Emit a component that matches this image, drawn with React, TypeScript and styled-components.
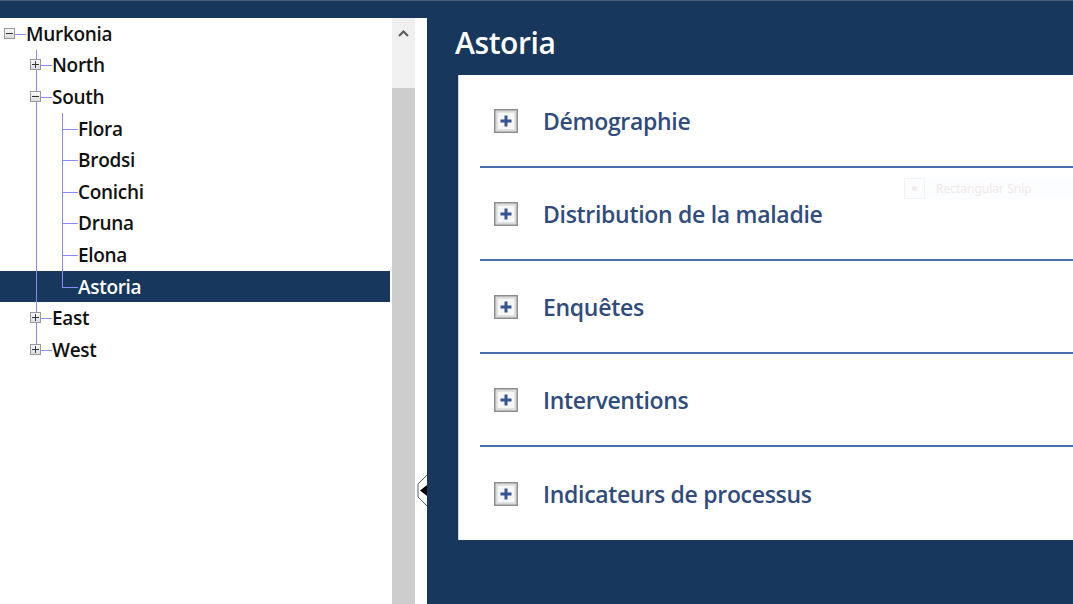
import styled, { createGlobalStyle } from "styled-components";

const NAVY = "#18375c";

const GlobalStyle = createGlobalStyle`
	html, body {
		margin: 0;
		padding: 0;
		overflow: hidden;
		background: ${NAVY};
	}
`;

const Shell = styled.div`
	width: 1073px;
	height: 604px;
	display: grid;
	grid-template-rows: 18px 1fr;
	font-family: "Open Sans", "Noto Sans", sans-serif;
`;

const TopBar = styled.div`
	background: ${NAVY};
	border-top: 1px solid #4b5f78;
`;

const Main = styled.div`
	display: flex;
	min-height: 0;
`;

const TreePane = styled.div`
	width: 392px;
	background: #fff;
	overflow: hidden;
`;

const TreeRow = styled.div<{ $selected?: boolean }>`
	display: flex;
	align-items: stretch;
	width: 390px;
	height: 31.6px;
	background: ${(p) => (p.$selected ? NAVY : "transparent")};
	color: ${(p) => (p.$selected ? "#fff" : "#111")};
`;

const Label = styled.span`
	align-self: center;
	font-size: 19px;
	font-weight: 600;
	letter-spacing: -0.3px;
`;

type Guide = "blank" | "pipe" | "tee" | "elbow" | "root";

const GuideCell = styled.div<{ $kind: Guide }>`
	position: relative;
	width: 26px;
	flex: none;

	&::before {
		content: "";
		display: ${(p) => (p.$kind === "blank" || p.$kind === "root" ? "none" : "block")};
		position: absolute;
		left: 10px;
		top: 0;
		width: 1px;
		bottom: ${(p) => (p.$kind === "elbow" ? "50%" : "0")};
		background: #8a8aff;
	}

	&::after {
		content: "";
		display: ${(p) => (p.$kind === "blank" || p.$kind === "pipe" ? "none" : "block")};
		position: absolute;
		left: 10px;
		right: 0;
		top: 50%;
		height: 1px;
		background: #8a8aff;
	}
`;

const Expander = styled.span`
	position: absolute;
	z-index: 1;
	left: 4px;
	top: calc(50% - 6px);
	width: 11px;
	height: 11px;
	box-sizing: border-box;
	border: 1px solid #9a9a9a;
	background: linear-gradient(#fafafa, #dcdcdc);
	display: flex;
	align-items: center;
	justify-content: center;
`;

function ExpanderBox({ open }: { open: boolean }) {
	return (
		<Expander>
			<svg width="7" height="7" viewBox="0 0 7 7">
				<rect x="0" y="3" width="7" height="1" fill="#333" />
				{!open && <rect x="3" y="0" width="1" height="7" fill="#2a3c70" />}
			</svg>
		</Expander>
	);
}

type Node = {
	label: string;
	guides: Guide[];
	expander?: "open" | "closed";
	selected?: boolean;
};

const tree: Node[] = [
	{ label: "Murkonia", guides: ["root"], expander: "open" },
	{ label: "North", guides: ["blank", "tee"], expander: "closed" },
	{ label: "South", guides: ["blank", "tee"], expander: "open" },
	{ label: "Flora", guides: ["blank", "pipe", "tee"] },
	{ label: "Brodsi", guides: ["blank", "pipe", "tee"] },
	{ label: "Conichi", guides: ["blank", "pipe", "tee"] },
	{ label: "Druna", guides: ["blank", "pipe", "tee"] },
	{ label: "Elona", guides: ["blank", "pipe", "tee"] },
	{ label: "Astoria", guides: ["blank", "pipe", "elbow"], selected: true },
	{ label: "East", guides: ["blank", "tee"], expander: "closed" },
	{ label: "West", guides: ["blank", "elbow"], expander: "closed" },
];

const Scrollbar = styled.div`
	width: 23px;
	flex: none;
	display: flex;
	flex-direction: column;
	background: #f0f0f0;
`;

const ScrollButton = styled.div`
	height: 30px;
	display: flex;
	align-items: center;
	justify-content: center;
`;

const ScrollTrack = styled.div`
	height: 40px;
`;

const ScrollThumb = styled.div`
	flex: 1;
	background: #cdcdcd;
`;

const Splitter = styled.div`
	position: relative;
	width: 12px;
	flex: none;
	background: #fff;
`;

const CollapseHandle = styled.svg`
	position: absolute;
	left: 2px;
	top: 456px;
`;

const ContentPane = styled.div`
	position: relative;
	flex: 1;
	background: ${NAVY};
	display: flex;
	flex-direction: column;
	overflow: hidden;
`;

const Title = styled.h1`
	margin: 0;
	height: 57px;
	padding-left: 28px;
	box-sizing: border-box;
	padding-top: 4px;
	font-size: 30px;
	font-weight: 600;
	color: #fff;
	line-height: 42px;
	letter-spacing: -0.4px;
`;

const Card = styled.div`
	margin-left: 31px;
	height: 465px;
	background: #fff;
	border-left: 1px solid #c9d3de;
	padding-left: 21px;
	box-sizing: border-box;
`;

const Section = styled.div<{ $last?: boolean }>`
	height: 93px;
	box-sizing: border-box;
	display: flex;
	align-items: center;
	gap: 25px;
	padding-left: 14px;
	border-bottom: ${(p) => (p.$last ? "none" : "2px solid #4a6fa8")};
`;

const SectionTitle = styled.span`
	font-size: 23px;
	font-weight: 600;
	color: #2f4c7c;
	letter-spacing: -0.3px;
`;

const SnipGhost = styled.div`
	position: absolute;
	left: 477px;
	top: 159px;
	display: flex;
	align-items: center;
	gap: 11px;
	height: 22px;
	padding-right: 48px;
	background: #fcfdfe;
	font-family: "Noto Sans", sans-serif;
	font-size: 12px;
	white-space: nowrap;
	color: #f1e9e9;
`;

const SnipIcon = styled.span`
	width: 21px;
	height: 21px;
	box-sizing: border-box;
	border: 1px solid #f0f4f8;
	display: flex;
	align-items: center;
	justify-content: center;

	&::after {
		content: "";
		width: 5px;
		height: 5px;
		border-radius: 50%;
		background: #f0ecec;
	}
`;

function PlusIcon() {
	return (
		<svg width="24" height="24" viewBox="0 0 24 24">
			<rect x="0.75" y="0.75" width="22.5" height="22.5" fill="#e4e4e4" stroke="#8c8c8c" strokeWidth="1.5" />
			<rect x="3" y="3" width="18" height="18" fill="#f7f7f7" stroke="#d0d0d0" />
			<rect x="6.5" y="10.5" width="11" height="3" fill="#34558f" />
			<rect x="10.5" y="6.5" width="3" height="11" fill="#34558f" />
		</svg>
	);
}

const sections = [
	"Démographie",
	"Distribution de la maladie",
	"Enquêtes",
	"Interventions",
	"Indicateurs de processus",
];

export default function App() {
	return (
		<>
			<GlobalStyle />
			<Shell>
				<TopBar />
				<Main>
					<TreePane>
						{tree.map((node) => (
							<TreeRow key={node.label} $selected={node.selected}>
								{node.guides.map((g, i) => (
									<GuideCell key={i} $kind={g}>
										{i === node.guides.length - 1 && node.expander
											? <ExpanderBox open={node.expander === "open"} />
											: null}
									</GuideCell>
								))}
								<Label>{node.label}</Label>
							</TreeRow>
						))}
					</TreePane>

					<Scrollbar>
						<ScrollButton>
							<svg width="11" height="7" viewBox="0 0 11 7">
								<polyline points="1,6 5.5,1.5 10,6" fill="none" stroke="#5a5a5a" strokeWidth="2" />
							</svg>
						</ScrollButton>
						<ScrollTrack />
						<ScrollThumb />
					</Scrollbar>

					<Splitter>
						<CollapseHandle width="11" height="33" viewBox="0 0 11 33">
							<polyline points="10.5,0.5 1,10 1,23 10.5,32.5" fill="none" stroke="#4d6482" strokeWidth="1" />
							<polygon points="3,16.5 10,11 10,22" fill="#000" />
						</CollapseHandle>
					</Splitter>

					<ContentPane>
						<Title>Astoria</Title>
						<Card>
							{sections.map((s, i) => (
								<Section key={s} $last={i === sections.length - 1}>
									<PlusIcon />
									<SectionTitle>{s}</SectionTitle>
								</Section>
							))}
						</Card>
						<SnipGhost>
							<SnipIcon />
							Rectangular Snip
						</SnipGhost>
					</ContentPane>
				</Main>
			</Shell>
		</>
	);
}
